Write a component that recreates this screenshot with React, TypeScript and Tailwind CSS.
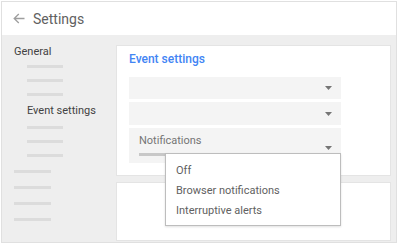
import React from 'react';

const font = { fontFamily: 'Roboto, "Liberation Sans", sans-serif' };

function Caret() {
  return (
    <svg width="7" height="4" viewBox="0 0 7 4" className="shrink-0">
      <path d="M0 0 L7 0 L3.5 4 Z" fill="#757575" />
    </svg>
  );
}

function Bar({ w, className = '' }: { w: string; className?: string }) {
  return <div className={`h-[3px] bg-[#dcdcdc] ${w} ${className}`} />;
}

export default function App() {
  return (
    <div className="w-[400px] h-[244px] bg-white p-px" style={font}>
      <div className="w-[396px] h-[242px] border border-[#e0e0e0] flex flex-col">
        {/* Header */}
        <div className="h-[33px] bg-white flex items-center pl-[11px] gap-[8px] shrink-0">
          <svg width="12" height="11" viewBox="0 0 12 11">
            <path d="M11.5 5.5 H1.2 M5.8 1 L1.2 5.5 L5.8 10" fill="none" stroke="#9e9e9e" strokeWidth="1.3" />
          </svg>
          <span className="text-[14px] text-[#616161] leading-none">Settings</span>
        </div>

        {/* Body */}
        <div className="flex-1 flex bg-[#eeeeee] min-h-0">
          {/* Sidebar */}
          <div className="w-[114px] shrink-0 pt-[10px] pl-[12px] flex flex-col">
            <span className="text-[11px] leading-[13px] text-[#424242]">General</span>
            <div className="pl-[13px] flex flex-col">
              <Bar w="w-[36px]" className="mt-[7px]" />
              <Bar w="w-[36px]" className="mt-[11px]" />
              <Bar w="w-[36px]" className="mt-[11px]" />
              <span className="mt-[8px] text-[11px] leading-[13px] text-[#424242]">Event settings</span>
              <Bar w="w-[36px]" className="mt-[9px]" />
              <Bar w="w-[36px]" className="mt-[11px]" />
              <Bar w="w-[36px]" className="mt-[11px]" />
            </div>
            <Bar w="w-[37px]" className="mt-[13px]" />
            <Bar w="w-[37px]" className="mt-[13px]" />
            <Bar w="w-[37px]" className="mt-[13px]" />
            <Bar w="w-[37px]" className="mt-[13px]" />
          </div>

          {/* Main */}
          <div className="flex-1 flex flex-col pt-[10px] pr-[5px] pb-px gap-[6px]">
            <div className="h-[131px] bg-white border border-[#e4e4e4] pt-[6px] pl-[12px] flex flex-col">
              <span className="text-[12px] leading-[14px] font-medium text-[#4285f4]">Event settings</span>
              <div className="mt-[11px] w-[212px] h-[22px] bg-[#f4f4f4] flex items-center justify-end pr-[9px]">
                <Caret />
              </div>
              <div className="mt-[3px] w-[212px] h-[23px] bg-[#f4f4f4] flex items-center justify-end pr-[9px]">
                <Caret />
              </div>
              <div className="relative mt-[3px] w-[212px] h-[35px] bg-[#f4f4f4] flex pl-[10px] pr-[9px] pt-[6px]">
                <div className="flex-1 flex flex-col">
                  <span className="text-[11px] leading-[13px] text-[#757575]">Notifications</span>
                  <div className="mt-[6px] w-[40px] h-[3px] bg-[#c8c8c8]" />
                </div>
                <div className="pt-[12px]">
                  <Caret />
                </div>
                {/* Dropdown menu */}
                <div className="absolute left-[36px] top-[25px] w-[176px] h-[73px] bg-white border border-[#bdbdbd] shadow-[0_1px_2px_rgba(0,0,0,0.12)] pt-[7px] pl-[10px] flex flex-col">
                  <span className="text-[11px] leading-[20px] text-[#616161]">Off</span>
                  <span className="text-[11px] leading-[20px] text-[#616161]">Browser notifications</span>
                  <span className="text-[11px] leading-[20px] text-[#616161]">Interruptive alerts</span>
                </div>
              </div>
            </div>
            <div className="flex-1 bg-white border border-[#e4e4e4]" />
          </div>
        </div>
      </div>
    </div>
  );
}
